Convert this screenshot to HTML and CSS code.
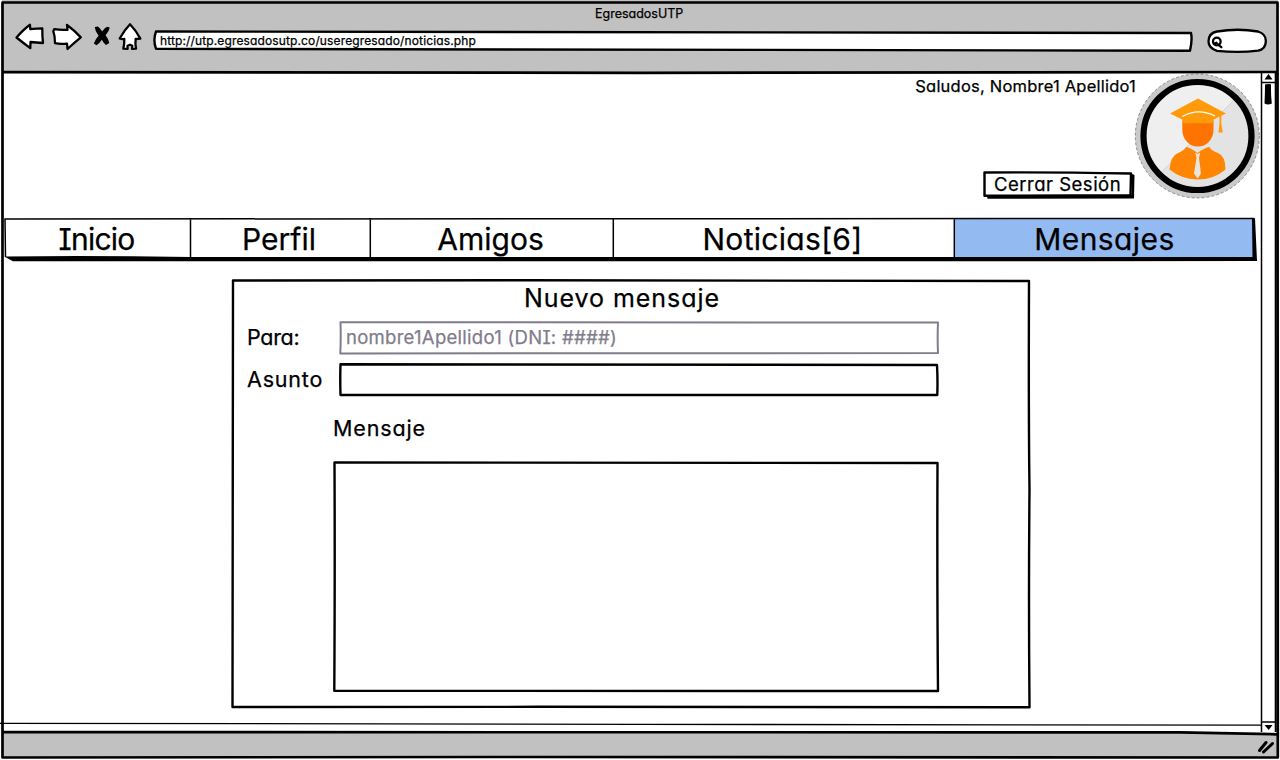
FILE: index.html
```html
<!DOCTYPE html>
<html lang="es">
<head>
<meta charset="utf-8">
<title>EgresadosUTP</title>
<link rel="stylesheet" href="styles.css">
</head>
<body>
<div class="window">
  <header class="chrome">
    <div class="chrome-title"><span>EgresadosUTP</span></div>
    <div class="toolbar">
      <svg class="tool back" width="32" height="30" viewBox="14 22 32 30"><path d="M16.5 37.5 Q24 29 30 24.8 L30.3 29.2 Q37 28.5 42.3 28.4 Q42.2 36 43 43 Q36 42.700 30.500 42 L30.300 48.200 Q24 43.500 16.500 37.500Z"/></svg>
      <svg class="tool forward" width="32" height="30" viewBox="51 22 32 30"><path d="M54.200 29.200 Q61 30.300 67.500 29.800 L67 25 Q74 30 80.800 37.400 Q74 43 67.500 49 L67 43.600 Q60 44.400 55 43.200 Q55 36 53.300 31.200Z"/></svg>
      <svg class="tool stop" width="18" height="22" viewBox="93 25 18 22"><path class="solid" d="M94.800 27 L98 26.500 Q100.800 29 102.200 31.500 Q104.500 28 107 26.700 L109.800 27.500 Q109 31.500 105.600 35.300 Q108.500 39 109.300 43 L106 45 Q103.500 43 101.800 39.800 Q99.500 43.500 96.500 45.300 L93.800 43.500 Q95.500 39 98.600 35.800 Q95 31.500 94.800 27Z"/></svg>
      <svg class="tool home" width="26" height="30" viewBox="117 22 26 30"><path d="M130 24.300 Q124.500 30 119.700 38.500 Q122 39.400 124.300 38.800 Q124.500 44 123.300 48.600 L127.600 48.900 L127.500 45.700 L130 44.700 L132.300 45.700 L132 48.900 L136 48.600 Q135 44 135.700 39 L140.300 38.600 Q136 30.500 130 24.300Z"/></svg>
      <div class="address">
        <svg class="frame" viewBox="0 0 1040 22"><path class="fill" d="M3 1.500 Q400 1.300 1038 3 Q1039.500 10 1037 20.700 Q500 20.500 3 18.800 Q-.2 10 3 1.500Z"/></svg>
        <span>http://utp.egresadosutp.co/useregresado/noticias.php</span>
      </div>
      <svg class="search" width="62" height="26" viewBox="1206 28 62 26"><path d="M1217 31.500 Q1238 28 1258 31.500 Q1266 34 1265.800 41 Q1266 49 1258 50.700 Q1238 53 1217 50.800 Q1208.500 48 1208.500 41.500 Q1208.500 33 1217 31.500Z"/><circle cx="1216.800" cy="41.500" r="3.800"/><path d="M1214.500 43.500 L1216.500 42.800 M1218 44.500 L1221.300 47.200"/></svg>
    </div>
  </header>

  <div class="viewport">
    <main class="page">
      <section class="user-bar">
        <div class="user-info">
          <span class="greeting">Saludos, Nombre1 Apellido1</span>
          <div class="logout">
            <svg class="frame" viewBox="0 0 152 29"><path class="shadow" d="M4 25 L148.500 24 L149 3 L151.500 4 L151 27.500 L4.500 27.800Z"/><path class="fill" d="M1.500 1.500 Q70 1 148 2.500 L147.500 24.300 Q70 24.800 1.500 24.700Z"/></svg>
            <span>Cerrar Sesión</span>
          </div>
        </div>
        <svg class="avatar" width="126" height="126" viewBox="1134 73 126 126">
          <circle cx="1197.300" cy="136" r="62" fill="#cacaca"/>
          <circle cx="1197.300" cy="136" r="62" fill="none" stroke="#777" stroke-width=".8" stroke-dasharray="3 2"/>
          <circle cx="1197.500" cy="136" r="54" fill="#e3e3e3"/>
          <path d="M1160.500 173 A52 52 0 1 1 1234 100Z" fill="#efefef"/>
          <path d="M1160.500 173 L1234 100" stroke="#c8c8c8" stroke-width=".7"/>
          <circle cx="1197.500" cy="136" r="54" fill="none" stroke="#000" stroke-width="6.200"/>
          <path d="M1182.300 121 H1213.500 V130 A15.600 16.500 0 0 1 1182.300 130Z" fill="#ff7400"/>
          <path d="M1198 98.500 L1226 113.500 L1213.500 119.500 V123.300 H1182.300 V119.500 L1170 113.500Z" fill="#ff9b0b"/>
          <path d="M1182.300 116.500 Q1198 107.500 1215 116" fill="none" stroke="#fff" stroke-width="1.100"/>
          <path d="M1219.500 116 L1221.300 115.500 V123 L1222.700 132.500 H1218.500 L1219.500 123Z" fill="#ff9b0b"/>
          <path d="M1186 147 Q1190 147.500 1197.500 153 Q1205 147.500 1209.500 147 Q1211 150.500 1218 153 Q1225.500 156 1225.500 169.500 Q1214 179.500 1197.500 179.500 Q1181 179 1169.500 169.500 Q1170.500 156 1178 153 Q1185 150 1186 147Z" fill="#ff8503"/>
          <path d="M1195.300 152.500 L1197.500 154 L1200.200 152.500 L1199 158 L1201 173.500 L1197.700 178.500 L1194 173.500 L1196.500 158Z" fill="#e8e4e0"/>
        </svg>
      </section>

      <nav class="tabs">
        <svg class="frame" viewBox="0 0 1254 46"><path fill="#fff" d="M2 1H950V42H2Z"/><path fill="#94baf2" d="M950 1H1250V42H950Z"/><path class="shadow" d="M1 38.500 Q90 37.500 186 39 L1248.500 39 L1248 1 L1251 0 L1253 43 Q700 43.600 9 43.200 L1 39Z"/><path class="line" d="M1.500 39 L1 1 Q300 0 600 .7 T1250 .5 M186.500 0V42 M366.300 0V42 M609.300 0V42 M950.300 0V42"/></svg>
        <a class="tab inicio">Inicio</a>
        <a class="tab perfil">Perfil</a>
        <a class="tab amigos">Amigos</a>
        <a class="tab noticias">Noticias[6]</a>
        <a class="tab mensajes">Mensajes</a>
      </nav>

      <form class="message-form">
        <svg class="frame" viewBox="0 0 800 430"><path class="fill" d="M2 1.500 Q400 .8 798 2 Q797.500 140 798.500 210 Q797.500 320 798.500 428.300 Q400 427.500 1.500 428 Q2.500 210 2 1.500Z"/></svg>
        <h1>Nuevo mensaje</h1>
        <div class="row">
          <label class="para">Para:</label>
          <div class="field disabled">
            <svg class="frame" viewBox="0 0 600 33"><path class="fill" d="M1.500 1.300 Q300 .9 599 1.500 Q598.300 16 599 32 Q300 32 1.300 32.500 Q2 15 1.500 1.300Z"/></svg>
            <span>nombre1Apellido1 (DNI: ####)</span>
          </div>
        </div>
        <div class="row second">
          <label class="asunto">Asunto</label>
          <div class="field">
            <svg class="frame" viewBox="0 0 600 33"><path class="fill" d="M1.500 1.300 Q300 .9 598 2 Q598.800 16 598.300 32 Q300 31.500 1.500 32 Q1 15 1.500 1.300Z"/></svg>
          </div>
        </div>
        <label class="body-label">Mensaje</label>
        <div class="body-field">
          <svg class="frame" viewBox="0 0 606 231"><path class="fill" d="M1.500 1.500 Q300 .8 604.500 2 Q604 120 605 230 Q300 229 1.300 229.800 Q2 110 1.500 1.500Z"/></svg>
        </div>
      </form>
    </main>
    <svg class="scrollbar" width="20" height="662" viewBox="1260 72 20 662"><path class="line" d="M1261.500 72V732 M1261 82.500H1275 M1261 722H1275"/><path d="M1275.700 72V732" stroke="#000" stroke-width="2"/><path d="M1264.500 79.500 L1268.500 74 L1272.500 79.500Z"/><path d="M1265 84.500 Q1268 83.500 1271 84.300 Q1270.700 94 1271.800 103.500 Q1268 105.300 1264.500 103.500 Q1265 94 1265 84.500Z"/><path d="M1264.500 725 H1272.500 L1268.700 730Z"/></svg>
  </div>

  <footer class="status">
    <svg class="grip" width="18" height="16" viewBox="1257 739 18 16"><path d="M1259.500 750.500 L1266 742.500 M1263.500 752 L1272.500 743.500"/></svg>
  </footer>

  <svg class="window-frame" viewBox="0 0 1280 760"><path d="M2.500 2.500 Q600 1 1277.500 2.500 Q1276.500 370 1277.800 757.500 Q900 756.300 500 757 T2.500 757.500 Q1.500 400 2.500 2.500Z"/><path d="M2 72.200 Q200 73.300 640 72.800 T1277 72"/><path d="M2 732.200 Q600 732 1180 732.300 L1277 734.300"/><path class="thin" d="M0 723.300 Q300 724.500 640 724.300 T1261 725.200"/></svg>
</div>
</body>
</html>
```
FILE: styles.css
```css
* { box-sizing: border-box; }

body {
  margin: 0;
  font-family: Inter, "Noto Sans", sans-serif;
  font-feature-settings: "cv11", "cv08";
  -webkit-text-stroke: .25px currentColor;
  color: #000;
  background: #fff;
}

.window {
  position: relative;
  display: flex;
  flex-direction: column;
  width: 1280px;
  height: 760px;
  overflow: hidden;
  white-space: nowrap;
}

.frame, .window-frame {
  position: absolute;
  inset: 0;
  width: 100%;
  height: 100%;
  overflow: visible;
}
.window-frame { pointer-events: none; }
.window-frame path { fill: none; stroke: #000; stroke-width: 2.7; stroke-linejoin: round; }
.window-frame .thin { stroke-width: 1.3; }
.frame .fill { fill: #fff; stroke: #000; stroke-width: 2.4; stroke-linejoin: round; }
.line { fill: none; stroke: #000; stroke-width: 1.5; }
.shadow { fill: #000; }

.chrome { height: 72px; margin: 0 2px; padding-top: 5px; background: #c1c1c1; }
.chrome-title { height: 17px; padding-left: 593px; font-size: 12.5px; line-height: 17px; }
.toolbar { display: flex; align-items: flex-start; padding-left: 12px; }
.tool path, .search path, .search circle { fill: #fff; stroke: #000; stroke-width: 2.3; stroke-linejoin: round; stroke-linecap: round; }
.tool .solid { fill: #000; stroke: none; }
.forward { margin-left: 5px; }
.stop { margin: 3px 0 0 10px; }
.home { margin-left: 6px; }
.address { position: relative; width: 1040px; height: 22px; margin: 8px 0 0 10px; padding-left: 7px; font-size: 12px; line-height: 21px; letter-spacing: .13px; }
.address span, .logout span, .field span, .tab, h1, label { position: relative; }
.search { margin: 6px 0 0 13px; }

.viewport { display: flex; height: 661px; }
.page { width: 1260px; }

.user-bar { display: flex; justify-content: flex-end; height: 146px; padding-top: 1px; }
.user-info { display: flex; flex-direction: column; justify-content: space-between; align-items: flex-end; height: 127px; padding-top: 3px; }
.greeting { font-size: 16.5px; line-height: 20px; margin-right: -2px; letter-spacing: .22px; }
.logout { position: relative; width: 152px; height: 29px; margin-right: -1px; padding-left: 11px; font-size: 18.5px; line-height: 27px; letter-spacing: .5px; }

.tabs { position: relative; display: flex; width: 1254px; height: 46px; margin-left: 4px; }
.tab { font-size: 30px; line-height: 43px; text-align: center; }
.inicio { width: 185px; letter-spacing: -.8px; }
.perfil { width: 180px; }
.amigos { width: 243px; }
.noticias { width: 341px; letter-spacing: .3px; }
.mensajes { width: 303px; letter-spacing: .4px; }

.message-form { position: relative; width: 800px; height: 430px; margin: 15px 0 0 231px; padding: 4px 15px 0 16px; }
h1 { margin: 0; padding-left: 277px; font-size: 25px; line-height: 30px; font-weight: 400; letter-spacing: .95px; }
.row { display: flex; margin-top: 8px; }
.row.second { margin-top: 9px; }
.row label { width: 92px; font-size: 21.5px; line-height: 32px; }
.row .para { letter-spacing: -.3px; }
.row .asunto { letter-spacing: .8px; }
.field { position: relative; width: 600px; height: 33px; padding-left: 7px; font-size: 18.5px; line-height: 33px; letter-spacing: .28px; }
.disabled { color: #817c8b; }
.disabled .fill { stroke: #817c8b; stroke-width: 2; }
.body-label { display: block; margin: 16px 0 0 86px; font-size: 21.5px; line-height: 32px; letter-spacing: .85px; }
.body-field { position: relative; width: 606px; height: 231px; margin: 17px 0 0 86px; }

.scrollbar { background: #fff; }
.status { display: flex; justify-content: flex-end; align-items: flex-start; height: 24px; margin: 0 2px; padding: 6px 3px 0 0; background: #c1c1c1; }
.grip path { fill: none; stroke: #000; stroke-width: 3; stroke-linecap: round; }
```
